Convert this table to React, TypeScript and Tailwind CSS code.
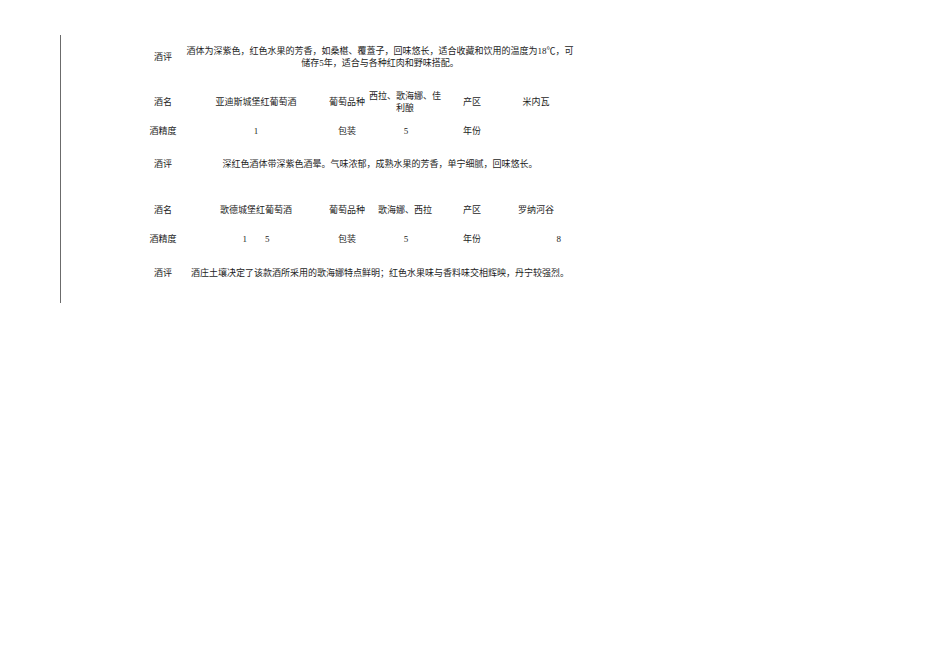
const font = {
  fontFamily: '"Liberation Serif", "Noto Sans CJK SC", serif',
};

function Label({ children }: { children: React.ReactNode }) {
  return <div className="w-[46px] shrink-0 text-center">{children}</div>;
}

function Cell({ w, children, className = "" }: { w: string; children?: React.ReactNode; className?: string }) {
  return <div className={`${w} shrink-0 text-center ${className}`}>{children}</div>;
}

function NameRow({ name, grape, region }: { name: string; grape: React.ReactNode; region: string }) {
  return (
    <div className="flex h-[30px] items-center">
      <Label>酒名</Label>
      <Cell w="w-[140px]">{name}</Cell>
      <Cell w="w-[42px]">葡萄品种</Cell>
      <Cell w="w-[86px]" className="whitespace-nowrap pr-[12px]">
        {grape}
      </Cell>
      <Cell w="w-[36px]">产区</Cell>
      <Cell w="w-[92px]">{region}</Cell>
    </div>
  );
}

function AlcRow({ alc, year }: { alc: React.ReactNode; year?: string }) {
  return (
    <div className="flex h-[28px] items-center">
      <Label>酒精度</Label>
      <Cell w="w-[140px]">{alc}</Cell>
      <Cell w="w-[42px]">包装</Cell>
      <Cell w="w-[86px]" className="pr-[10px]">
        5
      </Cell>
      <Cell w="w-[36px]">年份</Cell>
      <Cell w="w-[92px]" className="!text-right pr-[21px]">
        {year}
      </Cell>
    </div>
  );
}

function CommentRow({ h, lines }: { h: string; lines: string[] }) {
  return (
    <div className={`flex ${h} items-center`}>
      <Label>酒评</Label>
      <div className="w-[388px] shrink-0 text-center">
        {lines.map((l) => (
          <div key={l} className="whitespace-nowrap">
            {l}
          </div>
        ))}
      </div>
    </div>
  );
}

export default function App() {
  return (
    <div className="min-h-[672px] w-[950px] bg-white text-[#1c1c1c]" style={font}>
      <div className="ml-[60px] pt-[35px]">
        <div className="h-[268px] border-l border-[#6b6b6b] pl-[79px] pt-[7px] text-[9px] leading-[12px]">
          <CommentRow
            h="h-[30px]"
            lines={[
              "酒体为深紫色，红色水果的芳香，如桑椹、覆蓋子，回味悠长，适合收藏和饮用的温度为18℃，可",
              "储存5年，适合与各种红肉和野味搭配。",
            ]}
          />
          <div className="h-[15px]" />
          <NameRow
            name="亚迪斯城堡红葡萄酒"
            grape={
              <>
                西拉、歌海娜、佳
                <br />
                利酿
              </>
            }
            region="米内瓦"
          />
          <AlcRow alc="1" />
          <CommentRow h="h-[38px]" lines={["深红色酒体带深紫色酒晕。气味浓郁，成熟水果的芳香，单宁细腻，回味悠长。"]} />
          <div className="h-[12px]" />
          <NameRow name="歌德城堡红葡萄酒" grape="歌海娜、西拉" region="罗纳河谷" />
          <AlcRow
            alc={
              <span className="inline-flex gap-[18px]">
                <span>1</span>
                <span>5</span>
              </span>
            }
            year="8"
          />
          <CommentRow
            h="h-[40px]"
            lines={["酒庄土壤决定了该款酒所采用的歌海娜特点鲜明；红色水果味与香料味交相辉映，丹宁较强烈。"]}
          />
        </div>
      </div>
    </div>
  );
}
